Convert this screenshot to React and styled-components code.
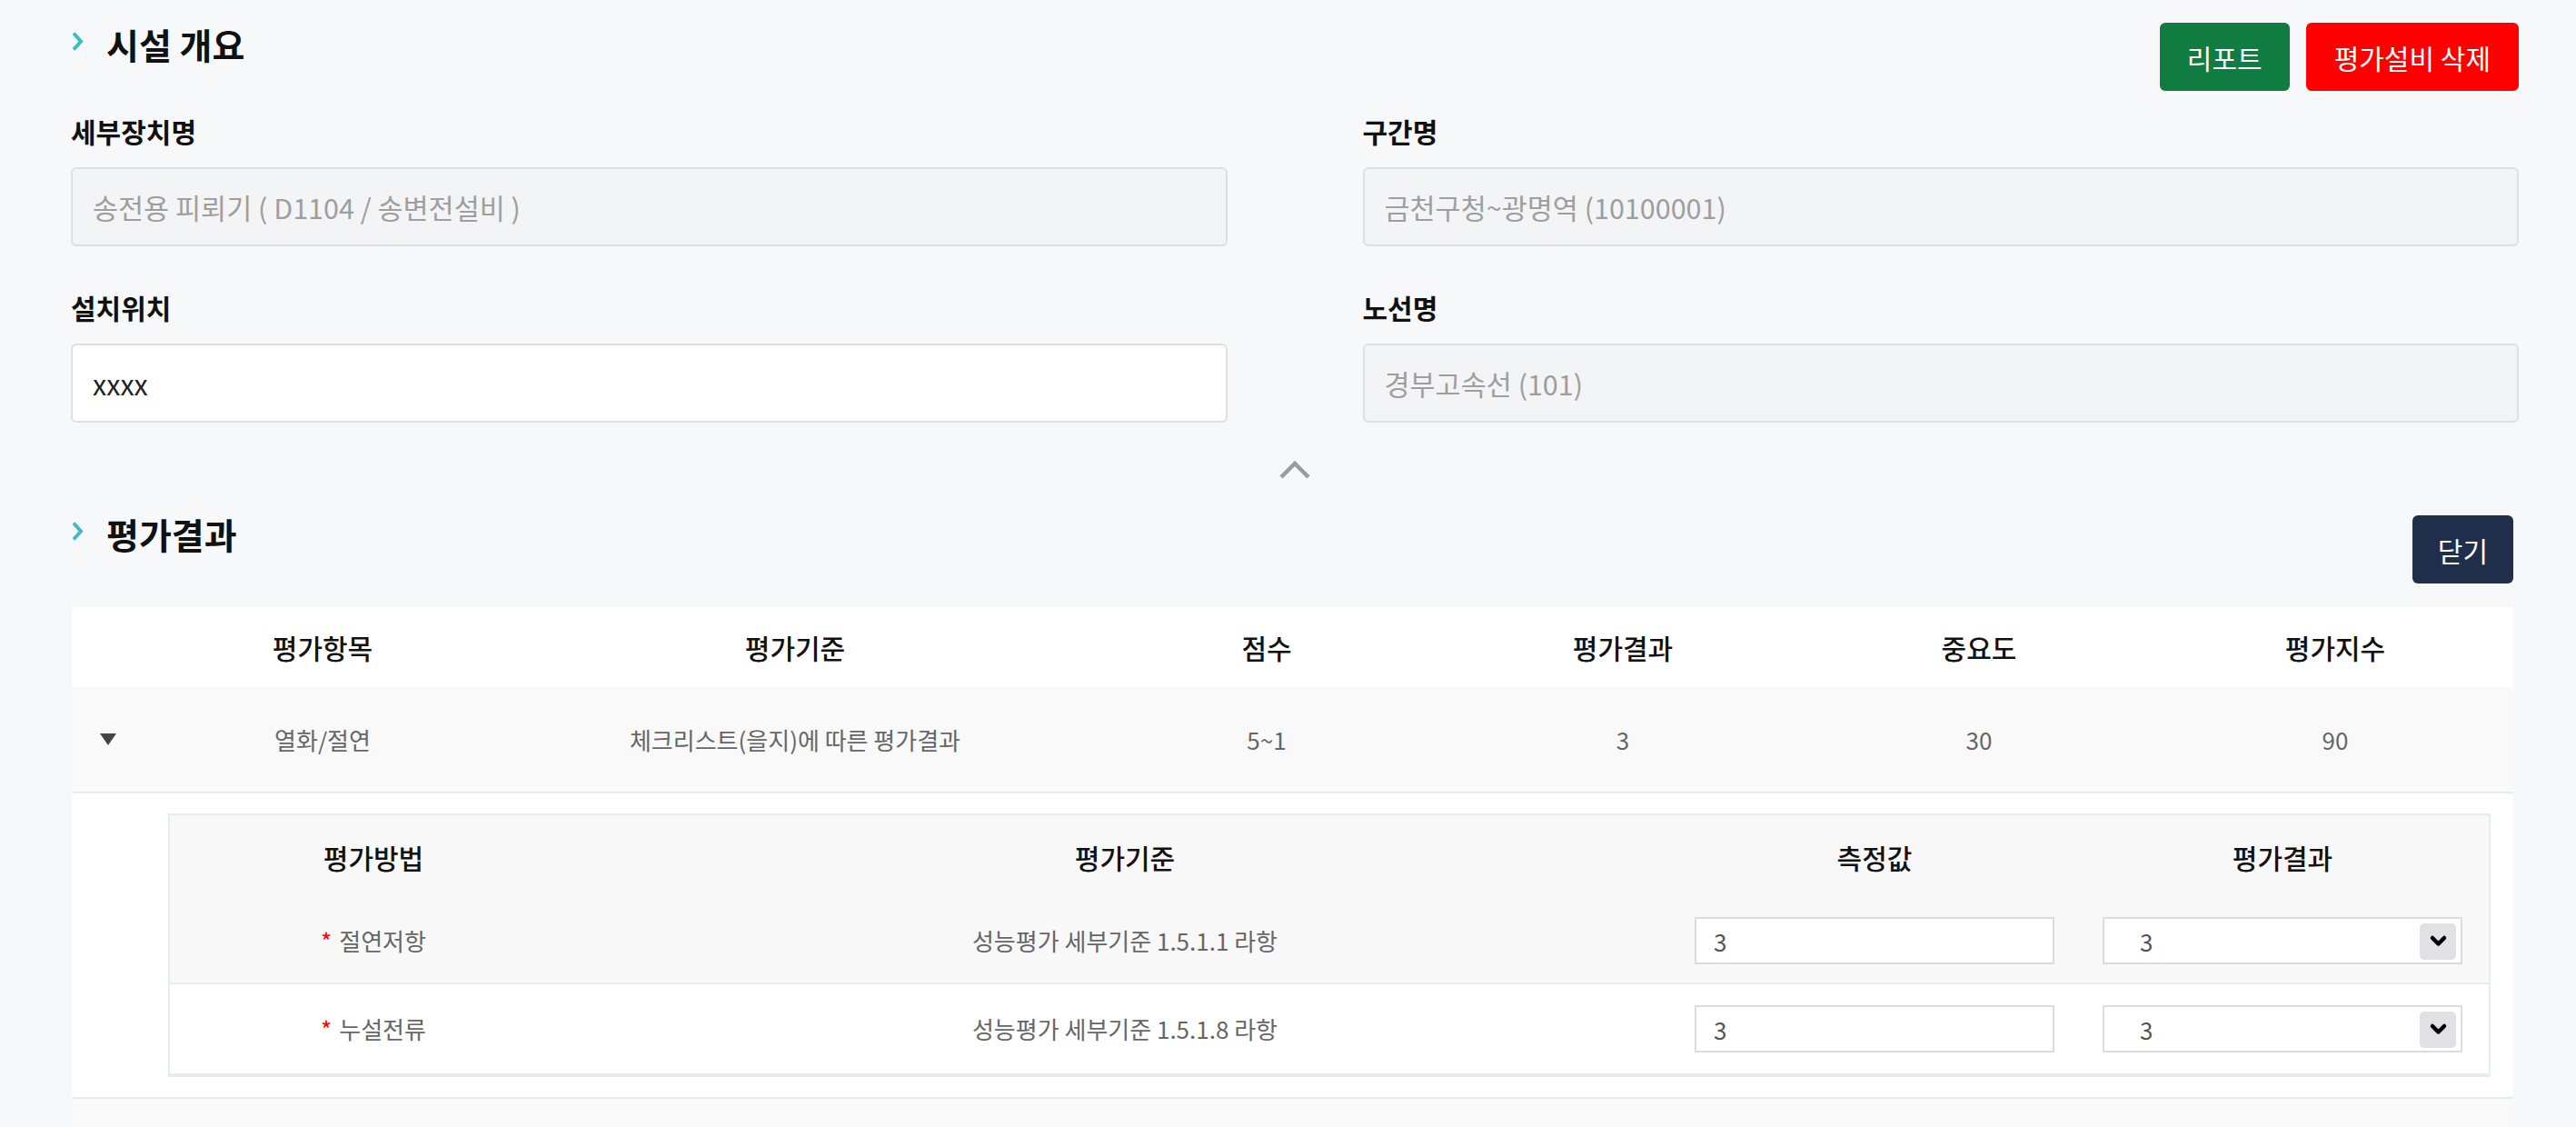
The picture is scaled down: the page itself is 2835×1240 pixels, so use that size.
import React from 'react';
import styled, { createGlobalStyle } from 'styled-components';

const GlobalStyle = createGlobalStyle`
  *, *::before, *::after { box-sizing: border-box; }
  html, body { margin: 0; padding: 0; background: #f7f8fa; overflow: hidden; }
  body {
    font-family: "Noto Sans CJK KR", "Noto Sans", sans-serif;
    color: #111;
  }
`;

const Page = styled.div`
  padding: 0 63px 0 78px;
  height: 1240px;
  overflow: hidden;
`;

const Section = styled.section`
  padding-top: ${p => p.$top}px;
  padding-right: ${p => p.$right || 0}px;
`;

const SectionHeader = styled.div`
  display: flex;
  justify-content: space-between;
  align-items: flex-start;
`;

const TitleWrap = styled.div`
  display: flex;
  align-items: flex-start;
`;

const TitleIcon = styled.svg`
  display: block;
  margin-top: 13px;
  flex: none;
`;

const Title = styled.h2`
  margin: 0 0 0 23px;
  font-size: 39px;
  font-weight: 700;
  line-height: 54px;
  color: #111;
`;

const ButtonGroup = styled.div`
  display: flex;
  gap: 18px;
  margin-top: ${p => p.$offset}px;
`;

const Button = styled.button`
  height: 75px;
  padding: 0 ${p => p.$pad || 29}px;
  border: none;
  border-radius: 6px;
  font-family: inherit;
  font-size: 30px;
  font-weight: 400;
  color: #fff;
  background: ${p => p.$bg};
  cursor: pointer;
`;

const FieldGrid = styled.div`
  display: grid;
  grid-template-columns: 1fr 1fr;
  column-gap: 149px;
  row-gap: 46px;
  margin-top: 23px;
`;

const Field = styled.div`
  display: flex;
  flex-direction: column;
`;

const Label = styled.label`
  font-size: 30px;
  font-weight: 700;
  line-height: 42px;
  margin-bottom: 19px;
  color: #111;
`;

const TextInput = styled.input`
  height: 87px;
  width: 100%;
  padding: 0 22px;
  border: 2px solid #dfdfe2;
  border-radius: 6px;
  background: ${p => (p.readOnly ? '#f3f4f6' : '#fff')};
  color: ${p => (p.readOnly ? '#9e9e9e' : '#222')};
  font-family: inherit;
  font-size: 30.5px;
  outline: none;
`;

const CollapseRow = styled.div`
  display: flex;
  justify-content: center;
  margin-top: 41px;
`;

const Table = styled.div`
  margin-top: 26px;
  margin-left: 1px;
  background: #fff;
`;

const MAIN_COLS = '79px 394fr 646fr 392fr 392fr 392fr 392fr';

const MainRow = styled.div`
  display: grid;
  grid-template-columns: ${MAIN_COLS};
  align-items: center;
  height: ${p => p.$h}px;
  background: ${p => p.$bg};
  border-bottom: ${p => (p.$line ? '2px solid #e9ecef' : 'none')};
`;

const HeadCell = styled.div`
  text-align: center;
  font-size: 30px;
  font-weight: 500;
  color: #111;
  line-height: 40px;
`;

const Cell = styled.div`
  text-align: center;
  font-size: 26px;
  color: #666;
  line-height: 36px;
`;

const ToggleCell = styled.div`
  display: flex;
  justify-content: center;
  align-items: center;
`;

const Expanded = styled.div`
  padding: 22px 25px 22px 106px;
  background: #fff;
  border-bottom: 2px solid #e9ecef;
`;

const SubTable = styled.div`
  border: 2px solid #e9ecef;
  background: #fff;
`;

const SUB_COLS = '448fr 1206fr 444fr 454fr';

const SubRow = styled.div`
  display: grid;
  grid-template-columns: ${SUB_COLS};
  align-items: center;
  height: ${p => p.$h}px;
  background: ${p => p.$bg};
  border-bottom: ${p => (p.$line ? '2px solid #e9ecef' : 'none')};
`;

const CenterCell = styled.div`
  display: flex;
  justify-content: center;
  align-items: center;
`;

const Req = styled.span`
  color: #ff0000;
  margin-right: 8px;
`;

const SmallInput = styled.input`
  width: 396px;
  height: 52px;
  padding: 0 19px;
  border: 2px solid #dcdcdc;
  background: #fff;
  font-family: inherit;
  font-size: 26px;
  color: #555;
  outline: none;
`;

const SelectWrap = styled.div`
  position: relative;
  width: 396px;
  height: 52px;
`;

const Select = styled.select`
  appearance: none;
  -webkit-appearance: none;
  width: 100%;
  height: 100%;
  padding: 0 0 0 39px;
  border: 2px solid #dcdcdc;
  border-radius: 0;
  background: #fff;
  font-family: inherit;
  font-size: 26px;
  color: #555;
  outline: none;
`;

const SelectArrow = styled.span`
  position: absolute;
  top: 7px;
  right: 7px;
  width: 40px;
  height: 40px;
  border-radius: 5px;
  background: #e1e0e4;
  display: flex;
  align-items: center;
  justify-content: center;
  pointer-events: none;
`;

const ChevronRight = () => (
  <TitleIcon width="16" height="24" viewBox="0 0 16 24">
    <path d="M3 2.5 L11 11.5 L3 20.5" fill="none" stroke="#40bcc0" strokeWidth="4" />
  </TitleIcon>
);

const ChevronUp = () => (
  <svg width="36" height="21" viewBox="0 0 36 21">
    <polyline points="3,19 18,4 33,19" fill="none" stroke="#9b9b9b" strokeWidth="4.5" />
  </svg>
);

const TriangleDown = () => (
  <svg width="18" height="13" viewBox="0 0 18 13">
    <polygon points="0,0 18,0 9,13" fill="#444" />
  </svg>
);

const SelectChevron = () => (
  <svg width="40" height="40" viewBox="0 0 40 40">
    <polyline points="14,16 20.5,22.5 27,16" fill="none" stroke="#000" strokeWidth="4.5" strokeLinecap="round" strokeLinejoin="round" />
  </svg>
);

const fields = [
  { label: '세부장치명', value: '송전용 피뢰기 ( D1104 / 송변전설비 )', readOnly: true },
  { label: '구간명', value: '금천구청~광명역 (10100001)', readOnly: true },
  { label: '설치위치', value: 'xxxx', readOnly: false },
  { label: '노선명', value: '경부고속선 (101)', readOnly: true },
];

const mainHead = ['평가항목', '평가기준', '점수', '평가결과', '중요도', '평가지수'];

const subRows = [
  { method: '절연저항', basis: '성능평가 세부기준 1.5.1.1 라항', value: '3', result: '3', bg: '#f8f8f8', h: 94 },
  { method: '누설전류', basis: '성능평가 세부기준 1.5.1.8 라항', value: '3', result: '3', bg: '#fff', h: 100 },
];

export default function App() {
  return (
    <>
      <GlobalStyle />
      <Page>
        <Section $top={21}>
          <SectionHeader>
            <TitleWrap>
              <ChevronRight />
              <Title>시설 개요</Title>
            </TitleWrap>
            <ButtonGroup $offset={4}>
              <Button $bg="#107c41" $pad={30}>리포트</Button>
              <Button $bg="#ff0000" $pad={31}>평가설비 삭제</Button>
            </ButtonGroup>
          </SectionHeader>
          <FieldGrid>
            {fields.map(f => (
              <Field key={f.label}>
                <Label>{f.label}</Label>
                <TextInput readOnly={f.readOnly} defaultValue={f.value} />
              </Field>
            ))}
          </FieldGrid>
          <CollapseRow>
            <ChevronUp />
          </CollapseRow>
        </Section>

        <Section $top={33} $right={6}>
          <SectionHeader>
            <TitleWrap>
              <ChevronRight />
              <Title>평가결과</Title>
            </TitleWrap>
            <ButtonGroup $offset={7}>
              <Button $bg="#1f2f4b" $pad={28}>닫기</Button>
            </ButtonGroup>
          </SectionHeader>

          <Table>
            <MainRow $h={88} $bg="#fff">
              <div />
              {mainHead.map(h => (
                <HeadCell key={h}>{h}</HeadCell>
              ))}
            </MainRow>
            <MainRow $h={117} $bg="#f9f9f9" $line>
              <ToggleCell>
                <TriangleDown />
              </ToggleCell>
              <Cell>열화/절연</Cell>
              <Cell>체크리스트(을지)에 따른 평가결과</Cell>
              <Cell>5~1</Cell>
              <Cell>3</Cell>
              <Cell>30</Cell>
              <Cell>90</Cell>
            </MainRow>
            <Expanded>
              <SubTable>
                <SubRow $h={92} $bg="#f8f8f8">
                  <HeadCell>평가방법</HeadCell>
                  <HeadCell>평가기준</HeadCell>
                  <HeadCell>측정값</HeadCell>
                  <HeadCell>평가결과</HeadCell>
                </SubRow>
                {subRows.map(r => (
                  <SubRow key={r.method} $h={r.h} $bg={r.bg} $line>
                    <Cell>
                      <Req>*</Req>
                      {r.method}
                    </Cell>
                    <Cell>{r.basis}</Cell>
                    <CenterCell>
                      <SmallInput defaultValue={r.value} />
                    </CenterCell>
                    <CenterCell>
                      <SelectWrap>
                        <Select defaultValue={r.result}>
                          <option value="5">5</option>
                          <option value="4">4</option>
                          <option value="3">3</option>
                          <option value="2">2</option>
                          <option value="1">1</option>
                        </Select>
                        <SelectArrow>
                          <SelectChevron />
                        </SelectArrow>
                      </SelectWrap>
                    </CenterCell>
                  </SubRow>
                ))}
              </SubTable>
            </Expanded>
            <MainRow $h={60} $bg="#f9f9f9" />
          </Table>
        </Section>
      </Page>
    </>
  );
}
